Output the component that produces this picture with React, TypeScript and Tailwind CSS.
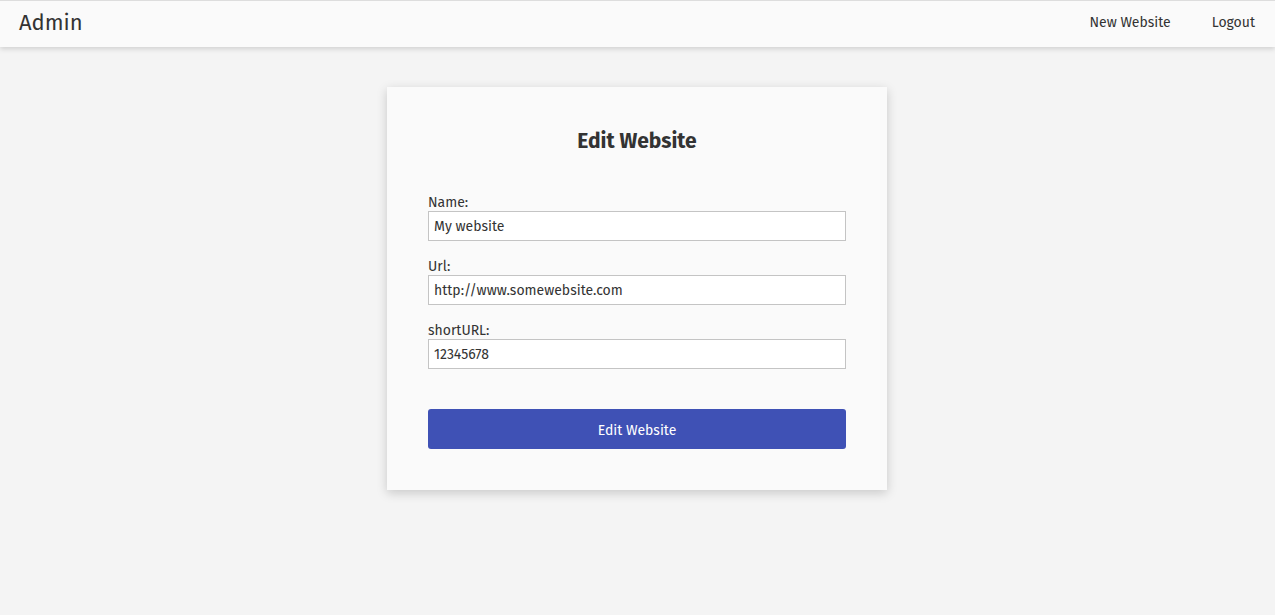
export default function App() {
  const font = { fontFamily: '"Fira Sans", "Open Sans", "Noto Sans", sans-serif' };
  return (
    <div style={font} className="min-h-[615px] bg-[#f4f4f4] text-[#333]">
      <nav className="h-[47px] border-t border-[#ddd] bg-[#fafafa] shadow-[0_2px_5px_rgba(0,0,0,0.15)] flex items-center justify-between pl-[19px] pr-[20px] pb-[2px]">
        <span className="text-[22px] leading-[26px] text-[#333]">Admin</span>
        <div className="flex gap-[41px] text-[14px] leading-[20px] text-[#333]">
          <a>New Website</a>
          <a>Logout</a>
        </div>
      </nav>
      <div className="flex justify-center pt-[40px] pr-[1px]">
        <div className="w-[500px] bg-[#fafafa] shadow-[0_3px_10px_rgba(0,0,0,0.18)] px-[41px] pt-[40px] pb-[41px]">
          <h1 className="text-center text-[21px] font-bold text-[#333] leading-[28px]">Edit Website</h1>
          <div className="mt-[38px] flex flex-col gap-[16px]">
            {[
              ["Name:", "My website"],
              ["Url:", "http://www.somewebsite.com"],
              ["shortURL:", "12345678"],
            ].map(([l, v]) => (
              <label key={l} className="flex flex-col text-[14px]">
                <span className="leading-[17px] pt-[1px]">{l}</span>
                <input
                  readOnly
                  value={v}
                  className="h-[30px] border border-[#c4c4c4] bg-white px-[5px] text-[14px] text-[#333] outline-none"
                  style={font}
                />
              </label>
            ))}
          </div>
          <button
            style={font}
            className="mt-[40px] w-full h-[40px] pt-[2px] rounded-[3px] bg-[#3f51b5] text-white text-[14px]"
          >
            Edit Website
          </button>
        </div>
      </div>
    </div>
  );
}
